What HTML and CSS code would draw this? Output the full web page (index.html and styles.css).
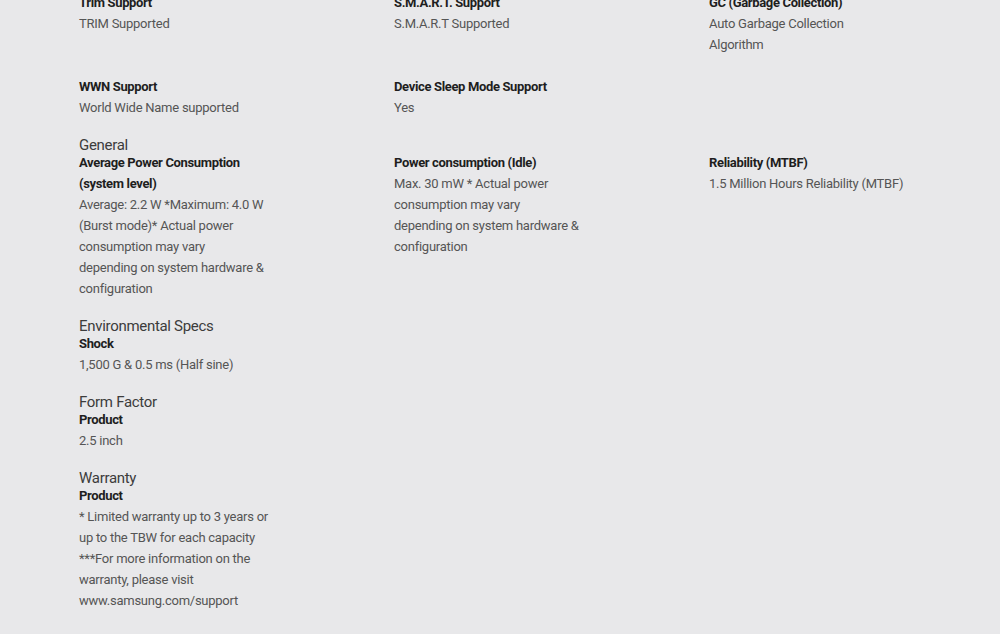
FILE: index.html
```html
<!DOCTYPE html>
<html lang="en">
<head>
  <meta charset="UTF-8">
  <meta name="viewport" content="width=device-width, initial-scale=1.0">
  <title>Specs</title>
  <link rel="stylesheet" href="styles.css">
</head>
<body>
  <div class="specs">
    <div class="spec-section first">
      <dl class="spec-grid">
        <div class="spec-item">
          <dt>Trim Support</dt>
          <dd>TRIM Supported</dd>
        </div>
        <div class="spec-item">
          <dt>S.M.A.R.T. Support</dt>
          <dd>S.M.A.R.T Supported</dd>
        </div>
        <div class="spec-item">
          <dt>GC (Garbage Collection)</dt>
          <dd>Auto Garbage Collection<br>Algorithm</dd>
        </div>
        <div class="spec-item">
          <dt>WWN Support</dt>
          <dd>World Wide Name supported</dd>
        </div>
        <div class="spec-item">
          <dt>Device Sleep Mode Support</dt>
          <dd>Yes</dd>
        </div>
      </dl>
    </div>

    <div class="spec-section">
      <h3 class="spec-title">General</h3>
      <dl class="spec-grid">
        <div class="spec-item">
          <dt>Average Power Consumption (system level)</dt>
          <dd>Average: 2.2 W *Maximum: 4.0 W (Burst mode)* Actual power consumption may vary<br>depending on system hardware &amp; configuration</dd>
        </div>
        <div class="spec-item">
          <dt>Power consumption (Idle)</dt>
          <dd>Max. 30 mW * Actual power consumption may vary<br>depending on system hardware &amp; configuration</dd>
        </div>
        <div class="spec-item">
          <dt>Reliability (MTBF)</dt>
          <dd>1.5 Million Hours Reliability (MTBF)</dd>
        </div>
      </dl>
    </div>

    <div class="spec-section">
      <h3 class="spec-title">Environmental Specs</h3>
      <dl class="spec-grid">
        <div class="spec-item">
          <dt>Shock</dt>
          <dd>1,500 G &amp; 0.5 ms (Half sine)</dd>
        </div>
      </dl>
    </div>

    <div class="spec-section">
      <h3 class="spec-title">Form Factor</h3>
      <dl class="spec-grid">
        <div class="spec-item">
          <dt>Product</dt>
          <dd>2.5 inch</dd>
        </div>
      </dl>
    </div>

    <div class="spec-section">
      <h3 class="spec-title">Warranty</h3>
      <dl class="spec-grid">
        <div class="spec-item">
          <dt>Product</dt>
          <dd>* Limited warranty up to 3 years or up to the TBW for each capacity<br>***For more information on the warranty, please visit www.samsung.com/support</dd>
        </div>
      </dl>
    </div>
  </div>
</body>
</html>
```

FILE: styles.css
```css
body {
  margin: 0;
  background-color: #e8e8ea;
  font-family: Roboto, "Liberation Sans", sans-serif;
  color: #555;
}
.specs {
  margin-top: -8px;
  padding-left: 79px;
}
.spec-section {
  margin-top: 21px;
}
.spec-section.first {
  margin-top: 0;
}
.spec-title {
  margin: 0;
  font-size: 15px;
  line-height: 13px;
  font-weight: 400;
  letter-spacing: -0.3px;
  color: #3c3c3c;
}
.spec-grid {
  margin: 0;
  display: grid;
  grid-template-columns: repeat(3, 315px);
  row-gap: 21px;
}
.spec-item {
  width: 197px;
  font-size: 13px;
  line-height: 21px;
  letter-spacing: -0.25px;
}
.spec-item dt {
  font-weight: 700;
  letter-spacing: -0.35px;
  color: #1e1e1e;
}
.spec-item dd {
  margin: 0;
}
```
